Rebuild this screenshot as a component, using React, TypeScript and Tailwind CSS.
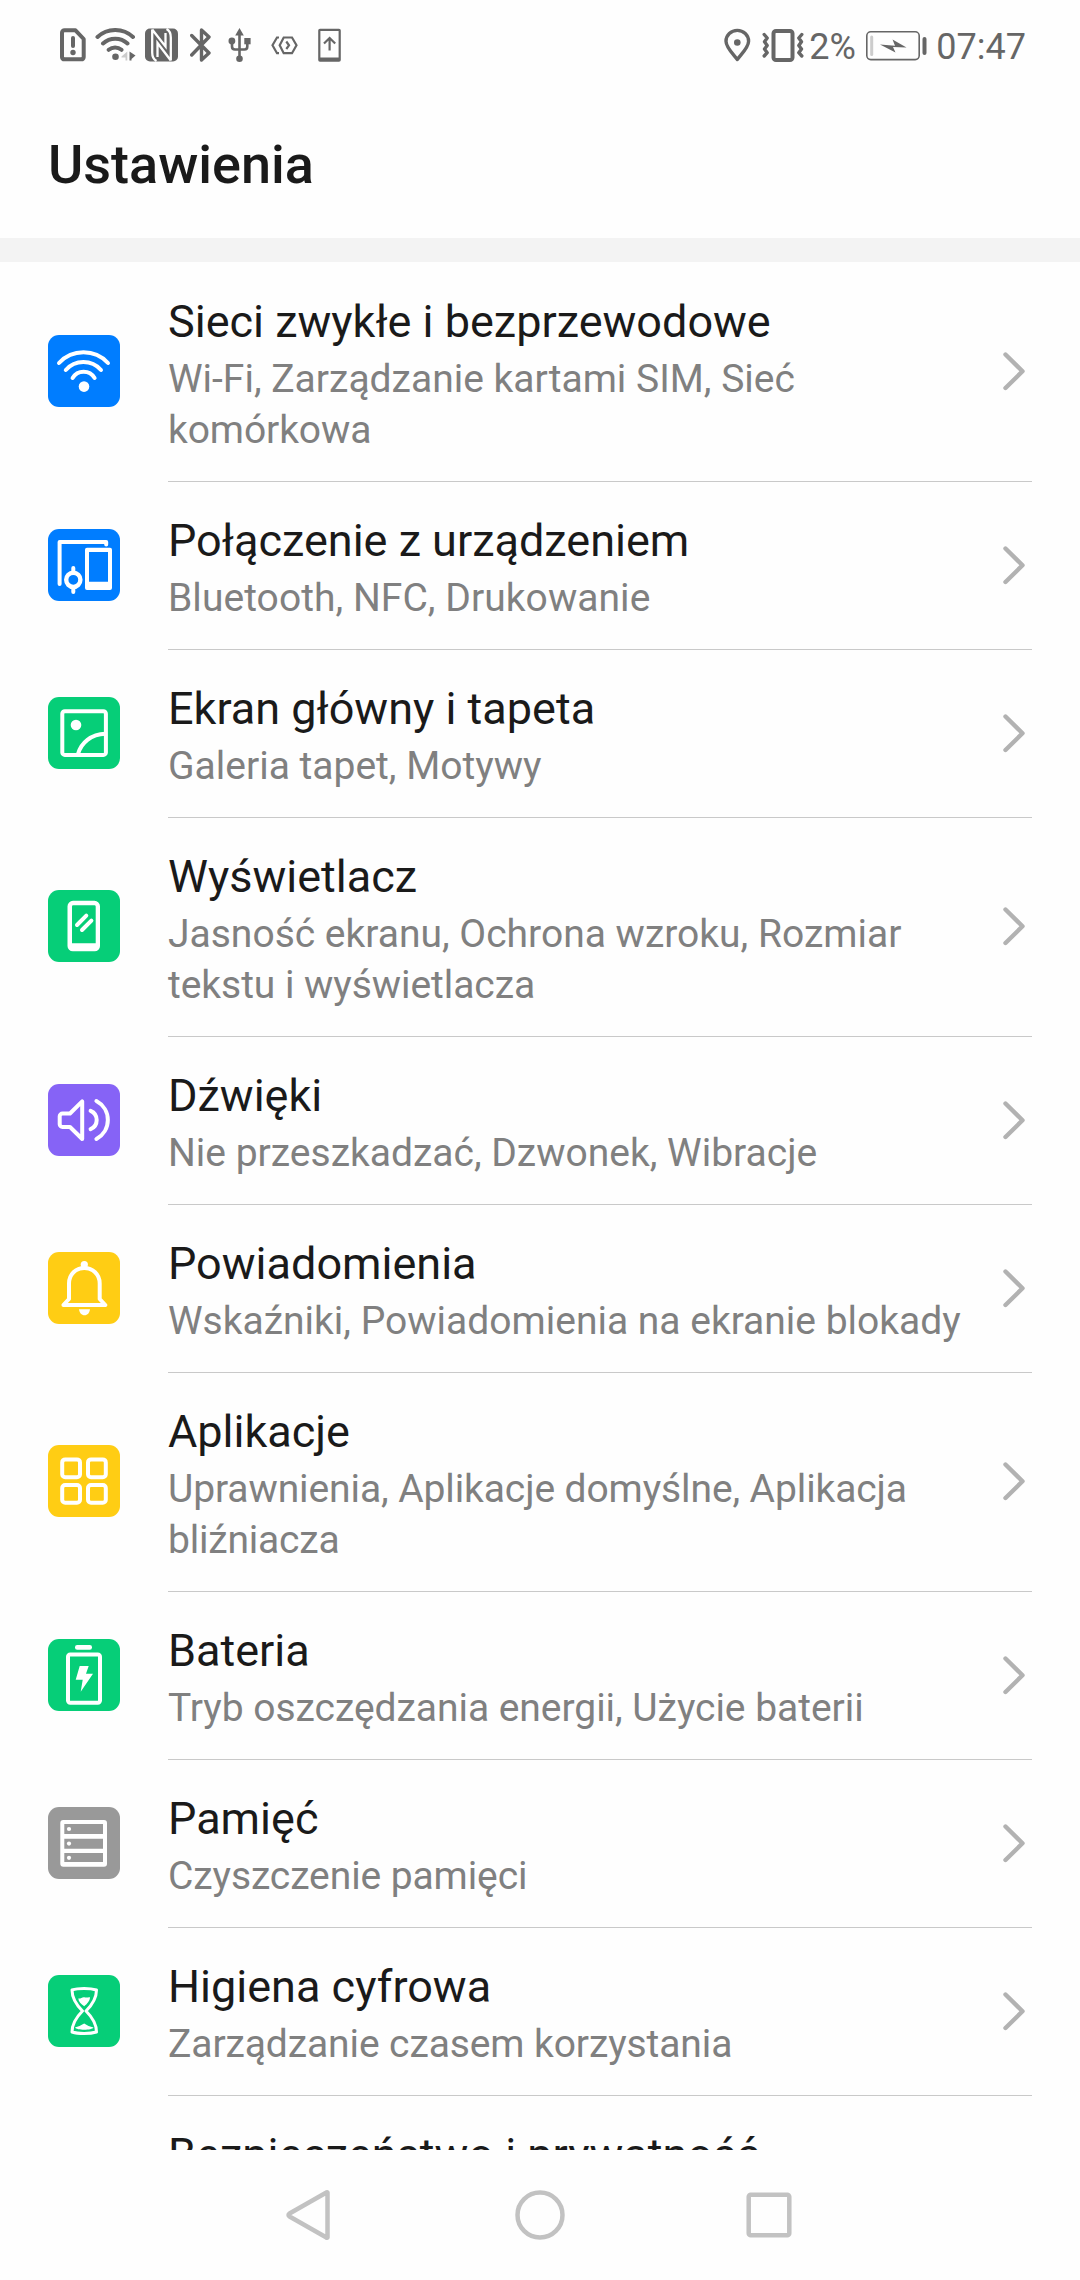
import React from 'react';

const icons: Record<string, React.ReactNode> = {
  wifi: (
    <>
      <path d="M11 28A33.4 33.4 0 0 1 60 28M17.8 35A23.4 23.4 0 0 1 53 35M24.6 43A12.8 12.8 0 0 1 46.6 43" />
      <circle cx="36" cy="51.6" r="5.3" fill="white" stroke="none" />
    </>
  ),
  devices: (
    <>
      <path d="M11.6 55V13H58.2V15.5" />
      <path d="M39 18.8H62A2 2 0 0 1 64 20.8V59A2 2 0 0 1 62 61H39A2 2 0 0 1 37 59V20.8A2 2 0 0 1 39 18.8ZM41 23V52.7H60V23Z" fill="white" fillRule="evenodd" stroke="none" />
      <circle cx="25.3" cy="50.8" r="7.1" strokeWidth="4.4" />
      <path d="M25.3 39V42M25.3 60V63" />
    </>
  ),
  wallpaper: (
    <>
      <rect x="14.3" y="14.3" width="43.6" height="43.6" rx="2.5" />
      <circle cx="28" cy="28" r="5.3" fill="white" stroke="none" />
      <path d="M30 57C33 46 43 37 57.5 36.7" strokeLinecap="butt" />
    </>
  ),
  display: (
    <>
      <path d="M25 10.8H46.5A5.5 5.5 0 0 1 52 16.3V56A5.3 5.3 0 0 1 46.7 61.3H24.8A5.3 5.3 0 0 1 19.5 56V16.3A5.5 5.5 0 0 1 25 10.8ZM25 15.3A1.2 1.2 0 0 0 24 16.4V53.3H47.7V16.4A1.2 1.2 0 0 0 46.5 15.3Z" fill="white" fillRule="evenodd" stroke="none" />
      <path d="M29 35L38.3 25.7M34 40L43.4 30.6" />
    </>
  ),
  sound: (
    <>
      <path d="M14.5 29.5H22L34.2 17.3V55L22 43H14.5A2.8 2.8 0 0 1 11.7 40.2V32.3A2.8 2.8 0 0 1 14.5 29.5Z" />
      <path d="M42.6 26.8A10 10 0 0 1 42.6 45.2M48.4 17A21.5 21.5 0 0 1 48.4 55" />
    </>
  ),
  bell: (
    <>
      <path d="M21 47V31.5C21 22 28 16 36.3 16S51.7 22 51.7 31.5V47L57.3 53H15.4Z" />
      <circle cx="36.3" cy="12.6" r="3.6" fill="white" stroke="none" />
      <path d="M31 57.3H42C41.5 61 39.5 63.3 36.5 63.3S31.5 61 31 57.3Z" fill="white" stroke="none" />
    </>
  ),
  apps: (
    <>
      <rect x="14.2" y="14.4" width="17.8" height="17.8" rx="3" />
      <rect x="40" y="14.4" width="17.8" height="17.8" rx="3" />
      <rect x="14.2" y="40" width="17.8" height="17.8" rx="3" />
      <rect x="40" y="40" width="17.8" height="17.8" rx="3" />
    </>
  ),
  battery: (
    <>
      <rect x="27" y="6" width="17" height="4.7" rx="2.2" fill="white" stroke="none" />
      <rect x="20" y="15.5" width="32" height="48.3" rx="2.2" />
      <path d="M31.7 27H40.7L38 34.7H45L32.7 52.7L34.7 40.7H27.7Z" fill="white" stroke="none" />
    </>
  ),
  storage: (
    <>
      <path d="M15.3 13H56A3 3 0 0 1 59 16V56.7A3 3 0 0 1 56 59.7H15.3A3 3 0 0 1 12.3 56.7V16A3 3 0 0 1 15.3 13ZM16.3 17V27H55V17ZM16.3 31.7V41.7H55V31.7ZM16.3 46V55H55V46Z" fill="white" fillRule="evenodd" stroke="none" />
      <g fill="white" stroke="none">
        <circle cx="21" cy="22" r="2.1" />
        <circle cx="21" cy="36.6" r="2.1" />
        <circle cx="21" cy="50.8" r="2.1" />
      </g>
    </>
  ),
  hourglass: (
    <>
      <path d="M24 15C30 13 42 13 48.5 15C48.5 24 43 31 38 36C43 41 48.5 48 48.5 57C42 59 30 59 24 57C24 48 29.5 41 34.5 36C29.5 31 24 24 24 15Z" strokeWidth="3" />
      <path d="M30.3 23.5C33 23.8 34.5 21.5 36.5 22.3S40 22 42 22.3C42 26 39 29 36.2 31.3C33 29 30.5 26.5 30.3 23.5Z" fill="white" stroke="none" />
      <path d="M27 52.5C30 51.5 33 50.5 36.2 48.5C39 50.5 42 51.5 45.5 52.5C44 55.5 28.5 55.5 27 52.5Z" fill="white" stroke="none" />
    </>
  ),
};

type Setting = {
  icon: string;
  color: string;
  title: string;
  lines: { text: string; tracking?: string }[];
};

const settings: Setting[] = [
  { icon: 'wifi', color: 'bg-[#007dff]', title: 'Sieci zwykłe i bezprzewodowe', lines: [{ text: 'Wi-Fi, Zarządzanie kartami SIM, Sieć' }, { text: 'komórkowa', tracking: 'tracking-[-0.1px]' }] },
  { icon: 'devices', color: 'bg-[#007dff]', title: 'Połączenie z urządzeniem', lines: [{ text: 'Bluetooth, NFC, Drukowanie', tracking: 'tracking-[0.05px]' }] },
  { icon: 'wallpaper', color: 'bg-[#06ce78]', title: 'Ekran główny i tapeta', lines: [{ text: 'Galeria tapet, Motywy' }] },
  { icon: 'display', color: 'bg-[#06ce78]', title: 'Wyświetlacz', lines: [{ text: 'Jasność ekranu, Ochrona wzroku, Rozmiar' }, { text: 'tekstu i wyświetlacza', tracking: 'tracking-[-0.05px]' }] },
  { icon: 'sound', color: 'bg-[#8663f6]', title: 'Dźwięki', lines: [{ text: 'Nie przeszkadzać, Dzwonek, Wibracje' }] },
  { icon: 'bell', color: 'bg-[#ffcd14]', title: 'Powiadomienia', lines: [{ text: 'Wskaźniki, Powiadomienia na ekranie blokady' }] },
  { icon: 'apps', color: 'bg-[#ffcd14]', title: 'Aplikacje', lines: [{ text: 'Uprawnienia, Aplikacje domyślne, Aplikacja', tracking: 'tracking-[-0.1px]' }, { text: 'bliźniacza', tracking: 'tracking-[-0.2px]' }] },
  { icon: 'battery', color: 'bg-[#06ce78]', title: 'Bateria', lines: [{ text: 'Tryb oszczędzania energii, Użycie baterii', tracking: 'tracking-[-0.04px]' }] },
  { icon: 'storage', color: 'bg-[#999999]', title: 'Pamięć', lines: [{ text: 'Czyszczenie pamięci', tracking: 'tracking-[-0.1px]' }] },
  { icon: 'hourglass', color: 'bg-[#06ce78]', title: 'Higiena cyfrowa', lines: [{ text: 'Zarządzanie czasem korzystania', tracking: 'tracking-[-0.1px]' }] },
];

const StatusBar: React.FC = () => (
  <div className="flex h-[90px] shrink-0 items-center justify-between pl-[60px] pr-[54px] text-[36px] leading-none text-[#666]">
    <div className="flex items-center">
      {/* sim alert */}
      <svg className="h-[34px] w-[26px]" viewBox="0 0 26 34" fill="none" stroke="currentColor" strokeWidth="4">
        <path d="M4.5 2.3H15.5L23.7 11V29A2.5 2.5 0 0 1 21.2 31.3H4.5A2.5 2.5 0 0 1 2 29V4.8A2.5 2.5 0 0 1 4.5 2.3Z" strokeLinejoin="round" />
        <path d="M13 10V18" strokeLinecap="round" />
        <circle cx="13" cy="24.5" r="2.7" fill="currentColor" stroke="none" />
      </svg>
      {/* wifi with traffic arrows */}
      <svg className="ml-[9px] h-[34px] w-[41px]" viewBox="0 0 41 34" fill="none" stroke="currentColor" strokeWidth="4" strokeLinecap="round">
        <path d="M2.5 9A26 26 0 0 1 38 9M8 15.5A18 18 0 0 1 32.5 15.5M13.7 21.8A10 10 0 0 1 26.5 21.8" />
        <circle cx="20.5" cy="28.7" r="3.3" fill="currentColor" stroke="none" />
        <path d="M26.5 28.5L32.3 23.5V32.5H30.5V29.5H26.5Z" fill="#ccc" stroke="none" />
        <path d="M34.5 23.5L40.5 27.5L36.5 31V32.5H34.5Z" fill="currentColor" stroke="none" />
      </svg>
      {/* nfc */}
      <svg className="ml-[9px] h-[34px] w-[33px]" viewBox="0 0 33 34">
        <rect y=".5" width="33" height="33" rx="5" fill="currentColor" />
        <path d="M7.2 1.5V24.5C7.2 29.5 8.5 31.5 11.5 33M25.8 32.5V9.5C25.8 4.5 24.5 2.5 21.5 1M7.2 1.5L20.5 18.5V5M12.5 29V15L25.8 32.5" fill="none" stroke="white" strokeWidth="2.3" />
      </svg>
      {/* bluetooth */}
      <svg className="ml-[12px] h-[34px] w-[21px]" viewBox="0 0 21 34" fill="none" stroke="currentColor" strokeWidth="3.4" strokeLinejoin="round" strokeLinecap="round">
        <path d="M1.7 7.5L19 25L11.5 32V2L19 9L1.7 27" />
      </svg>
      {/* usb */}
      <svg className="ml-[17px] h-[34px] w-[23px]" viewBox="0 0 23 34" fill="none" stroke="currentColor" strokeWidth="2.6">
        <path d="M11.5 4V31M4 13V18.5Q4 21.5 7 21.5H16.5Q19.3 21.5 19.3 18.5V13" />
        <path d="M11.5 0L15.8 7.5H7.2Z" fill="currentColor" stroke="none" />
        <circle cx="3.9" cy="13" r="3.4" fill="currentColor" stroke="none" />
        <rect x="16.3" y="10" width="6.3" height="6.3" fill="currentColor" stroke="none" />
        <circle cx="11.5" cy="30.7" r="3.3" fill="currentColor" stroke="none" />
      </svg>
      {/* hisuite */}
      <svg className="ml-[20px] h-[34px] w-[27px]" viewBox="0 0 27 34" fill="none" stroke="currentColor" strokeWidth="2.2">
        <path d="M8 9.5H6L1.5 17.3L6 25.2H8" />
        <path d="M12.7 9.5H21L25.5 17.3L21 25.2H12.7L8.7 17.3Z" />
        <path d="M15.3 13.5L18 17.3L15.3 21" />
      </svg>
      {/* upload to phone */}
      <svg className="ml-[20px] h-[34px] w-[23px]" viewBox="0 0 23 34" fill="none" stroke="currentColor" strokeWidth="2.2">
        <path d="M2 .8H21A1.8 1.8 0 0 1 22.8 2.6V32A1.8 1.8 0 0 1 21 33.8H2A1.8 1.8 0 0 1 .2 32V2.6A1.8 1.8 0 0 1 2 .8ZM2.4 3V29.5H20.6V3Z" fill="currentColor" fillRule="evenodd" stroke="none" />
        <path d="M11.6 22.5V10.5M6 15.5L11.6 10L17.2 15.5" />
      </svg>
    </div>
    <div className="flex items-center">
      {/* location */}
      <svg className="h-[34px] w-[27px]" viewBox="0 0 27 34" fill="none" stroke="currentColor" strokeWidth="3.4">
        <path d="M13.3 31.5C10 27 2 19.5 2 13.2A11.3 10.8 0 0 1 24.6 13.2C24.6 19.5 16.5 27 13.3 31.5Z" strokeLinejoin="round" />
        <circle cx="13.3" cy="14.5" r="3.3" fill="currentColor" stroke="none" />
      </svg>
      {/* vibrate */}
      <svg className="ml-[11px] h-[34px] w-[42px]" viewBox="0 0 42 34" fill="none" stroke="currentColor" strokeWidth="3.4" strokeLinecap="round" strokeLinejoin="round">
        <rect x="11.5" y="3" width="19" height="29" rx="2.5" strokeWidth="4" />
        <path d="M2.2 6.5L5.2 10L2.5 13.7L5.2 17.5L2.5 21L5.2 24.7L2.2 28M39.8 6.5L36.8 10L39.5 13.7L36.8 17.5L39.5 21L36.8 24.7L39.8 28" />
      </svg>
      <span className="ml-[5px] mt-[3px] w-[57px]">2%</span>
      {/* charging battery */}
      <svg className="h-[34px] w-[61px]" viewBox="0 0 61 34" fill="none" stroke="currentColor">
        <rect x=".8" y="3.8" width="52.4" height="27.8" rx="4" strokeWidth="1.6" />
        <path d="M5.7 9V26.5" stroke="#ccc" strokeWidth="3" strokeLinecap="round" />
        <path d="M14 16.5L29 17.8L26.5 11.5L40.5 19.5L27 19.1L29.5 24.5Z" fill="currentColor" stroke="none" />
        <path d="M58.5 11V25" strokeWidth="4" strokeLinecap="round" />
      </svg>
      <span className="ml-[9px] mt-[3px]">07:47</span>
    </div>
  </div>
);

const SettingsRow: React.FC<{ item: Setting }> = ({ item }) => (
  <div className="flex items-center pl-12">
    <div className={`mb-[3px] h-[72px] w-[72px] shrink-0 rounded-[11px] ${item.color}`}>
      <svg viewBox="0 0 72 72" fill="none" stroke="white" strokeWidth="4" strokeLinecap="round" strokeLinejoin="round">
        {icons[item.icon]}
      </svg>
    </div>
    <div className="mx-12 flex flex-1 items-center justify-between border-b border-[#c9c9c9] pb-[25px] pt-[30px]">
      <div className="whitespace-nowrap">
        <h2 className="mb-1 text-[45px] leading-[57px] text-[#1a1a1a]">{item.title}</h2>
        {item.lines.map((line) => (
          <p key={line.text} className={`text-[39px] leading-[51px] text-[#808080] ${line.tracking ?? ''}`}>{line.text}</p>
        ))}
      </div>
      <svg className="mb-[7px] mr-[6px] h-[40px] w-[24px] shrink-0" viewBox="0 0 24 40" fill="none" stroke="#b2b2b2" strokeWidth="4.4" strokeLinecap="round" strokeLinejoin="round">
        <path d="M3.5 3.5L20.5 20.3L3.5 37" />
      </svg>
    </div>
  </div>
);

const NavBar: React.FC = () => (
  <div className="flex h-[130px] shrink-0 items-center justify-center gap-[180px]">
    <svg className="h-[52px] w-[48px]" viewBox="0 0 48 52" fill="none" stroke="#c2c2c2" strokeWidth="4.5" strokeLinejoin="round">
      <path d="M41.5 3.5V48.5Q41 49 40 48.3L3.5 27.5Q1.5 26 3.5 24.5L40 3.7Q41 3 41.5 3.5Z" />
    </svg>
    <svg className="h-[52px] w-[52px]" viewBox="0 0 52 52" fill="none" stroke="#c2c2c2" strokeWidth="4.5">
      <circle cx="26" cy="26" r="22.5" />
    </svg>
    <svg className="h-[52px] w-[48px]" viewBox="0 0 48 52" fill="none" stroke="#c2c2c2" strokeWidth="4.5">
      <rect x="2.7" y="5.7" width="40.6" height="40.6" rx="2" />
    </svg>
  </div>
);

export default function App() {
  return (
    <div className="flex h-[2280px] w-[1080px] flex-col overflow-hidden bg-[#fefefe] font-['Roboto',sans-serif]">
      <StatusBar />
      <header className="flex h-[148px] shrink-0 items-center px-12 pt-px">
        <h1 className="text-[54px] font-medium leading-none text-[#1a1a1a]">Ustawienia</h1>
      </header>
      <div className="h-6 shrink-0 bg-[#f3f3f3]" />
      <main className="min-h-0 flex-1 overflow-hidden pt-px">
        {settings.map((item) => (
          <SettingsRow key={item.title} item={item} />
        ))}
        <h2 className="pl-[168px] pt-[30px] text-[45px] leading-[57px] text-[#1a1a1a]">Bezpieczeństwo i prywatność</h2>
      </main>
      <NavBar />
    </div>
  );
}
